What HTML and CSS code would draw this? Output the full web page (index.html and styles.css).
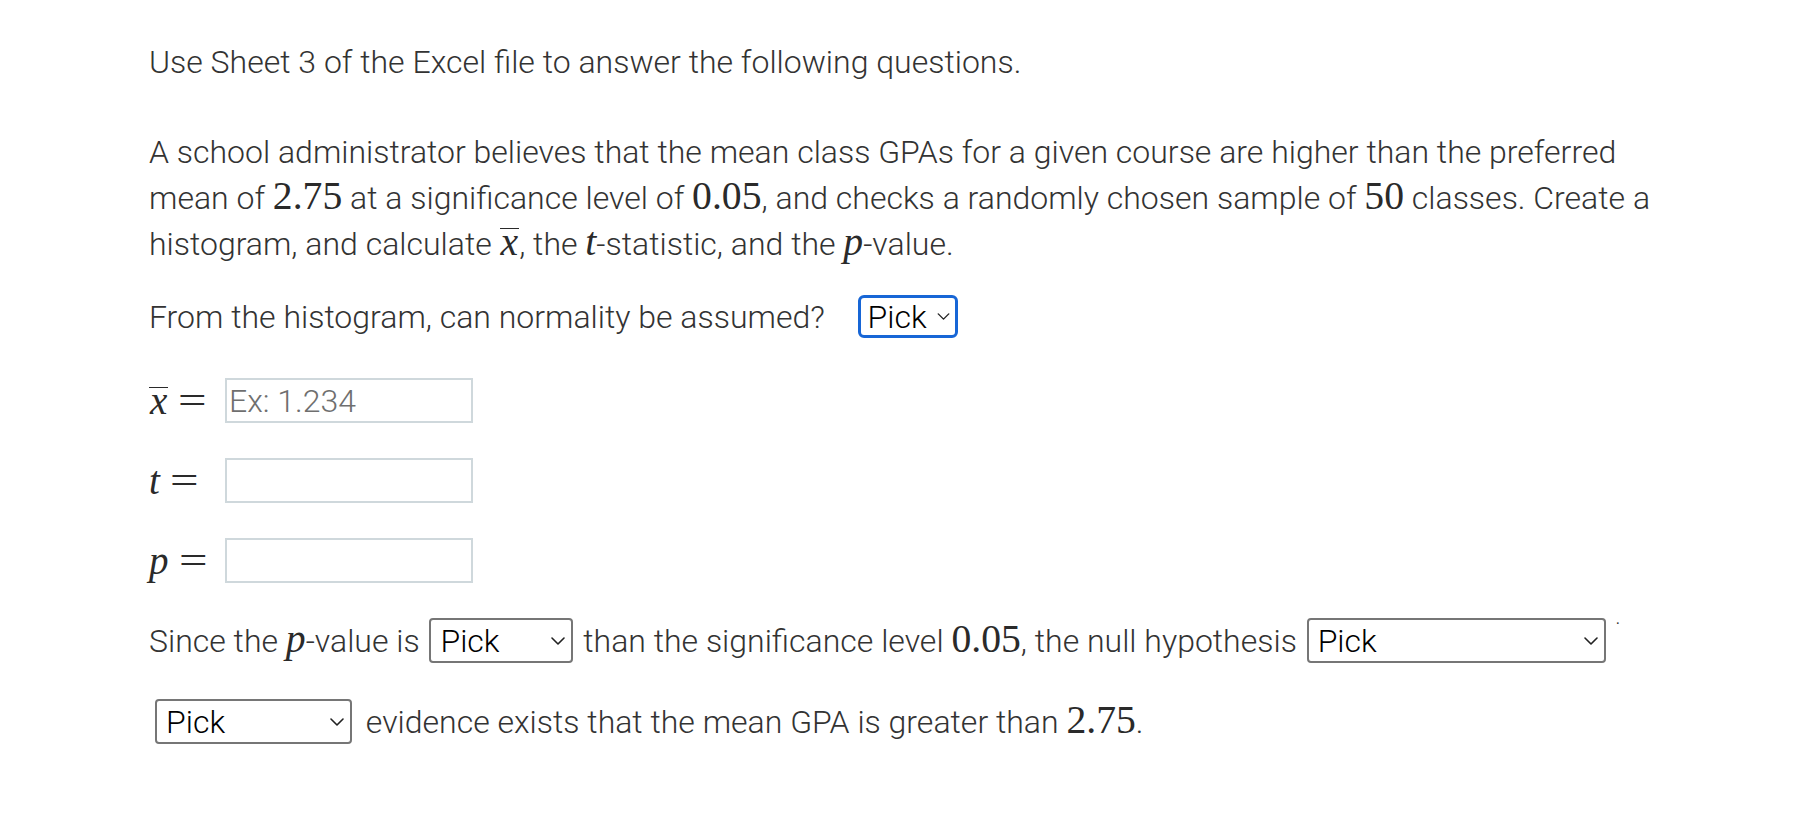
FILE: index.html
```html
<!DOCTYPE html>
<html lang="en">
<head>
<meta charset="utf-8">
<title>Hypothesis test question</title>
<link rel="stylesheet" href="styles.css">
</head>
<body>
<div class="page">
  <p class="intro">Use Sheet 3 of the Excel file to answer the following questions.</p>

  <p class="problem">A school administrator believes that the mean class GPAs for a given course are higher than the preferred mean of <span class="m">2.75</span> at a significance level of <span class="m">0.05</span>, and checks a randomly chosen sample of <span class="m">50</span> classes. Create a histogram, and calculate <span class="m"><span class="xbar mi">x</span></span>, the <span class="m mi">t</span>-statistic, and the <span class="m mi">p</span>-value.</p>

  <p class="q-normal">From the histogram, can normality be assumed? <span class="sel sel-focus"><span class="sel-text">Pick</span><svg class="chev chev-sm" viewBox="0 0 14 8"><polyline points="1,1 7,7 13,1"/></svg></span></p>

  <div class="answers">
    <div class="lbl"><span class="xbar mi">x</span><span class="eq">=</span></div>
    <input class="inp" type="text" placeholder="Ex: 1.234">
    <div class="lbl"><span class="mi">t</span><span class="eq">=</span></div>
    <input class="inp" type="text">
    <div class="lbl"><span class="mi">p</span><span class="eq">=</span></div>
    <input class="inp" type="text">
  </div>

  <p class="since">Since the <span class="m mi">p</span>-value is <span class="sel sel-cmp"><span class="sel-text">Pick</span><svg class="chev" viewBox="0 0 14 8"><polyline points="1,1 7,7 13,1"/></svg></span> than the significance level <span class="m">0.05</span>, the null hypothesis <span class="sel sel-hyp"><span class="sel-text">Pick</span><svg class="chev" viewBox="0 0 14 8"><polyline points="1,1 7,7 13,1"/></svg></span><span class="dot">.</span></p>

  <p class="last"><span class="sel sel-evi"><span class="sel-text">Pick</span><svg class="chev" viewBox="0 0 14 8"><polyline points="1,1 7,7 13,1"/></svg></span> evidence exists that the mean GPA is greater than <span class="m">2.75</span>.</p>
</div>
</body>
</html>
```

FILE: styles.css
```css
html, body {
  margin: 0;
  padding: 0;
  background: #ffffff;
}

.page {
  padding: 39px 0 40px 149px;
  font-family: Roboto, "Liberation Sans", sans-serif;
  font-weight: 300;
  font-size: 32px;
  line-height: 46px;
  color: #333333;
}

p {
  margin: 0;
}

.problem {
  margin-top: 44px;
  max-width: 1520px;
}

.m {
  font-family: "Liberation Serif", "DejaVu Serif", serif;
  font-weight: 400;
  font-size: 1.24em;
  line-height: 1;
  color: #2a2a2a;
}

.mi {
  font-style: italic;
}

.xbar {
  display: inline-block;
  border-top: 1.5px solid currentColor;
  line-height: 26px;
  padding: 0 1px;
}

.q-normal {
  margin-top: 26.5px;
}

.sel {
  display: inline-flex;
  align-items: center;
  justify-content: space-between;
  box-sizing: border-box;
  height: 45px;
  margin: 0 2px;
  border: 2px solid #767676;
  border-radius: 4px;
  padding: 0 6px 0 9px;
  background: #ffffff;
  color: #000000;
  font-family: Roboto, "Liberation Sans", sans-serif;
  font-weight: 300;
  font-size: 32px;
  line-height: 1;
  vertical-align: baseline;
}

.sel-text {
  line-height: 1;
}

.chev {
  width: 14px;
  height: 8px;
  fill: none;
  stroke: #222222;
  stroke-width: 1.6;
  stroke-linecap: round;
  stroke-linejoin: round;
}

.chev-sm {
  width: 13px;
  height: 7px;
}

.sel-focus {
  width: 100px;
  height: 43px;
  border: 3px solid #1766d6;
  border-radius: 6px;
  padding: 0 5px 0 7px;
  margin-left: 25px;
}

.sel-cmp {
  width: 144px;
}

.sel-hyp {
  width: 299px;
}

.sel-evi {
  width: 197px;
  margin-left: 6px;
  margin-right: 6px;
}

.answers {
  margin-top: 38.5px;
  display: grid;
  grid-template-columns: 76px 248px;
  row-gap: 35px;
  align-items: center;
}

.lbl {
  font-family: "Liberation Serif", "DejaVu Serif", serif;
  font-weight: 400;
  font-size: 39px;
  line-height: 1;
  color: #2a2a2a;
  white-space: nowrap;
}

.eq {
  font-style: normal;
  display: inline-block;
  margin-left: 10px;
  transform: scaleX(1.3);
  transform-origin: left center;
}

.inp {
  box-sizing: border-box;
  width: 248px;
  height: 45px;
  margin: 0;
  border: 2px solid #cfd8dc;
  border-radius: 0;
  padding: 0 2px;
  font-family: Roboto, "Liberation Sans", sans-serif;
  font-weight: 300;
  font-size: 32px;
  color: #333333;
  background: #ffffff;
  outline: none;
}

.inp::placeholder {
  color: #6f6f6f;
  opacity: 1;
}

.since {
  margin-top: 34.5px;
  white-space: nowrap;
}

.dot {
  font-size: 16px;
  font-weight: 400;
  line-height: 0;
  margin-left: 8px;
  vertical-align: 28px;
  color: #333333;
}

.last {
  margin-top: 35px;
  white-space: nowrap;
}
```
